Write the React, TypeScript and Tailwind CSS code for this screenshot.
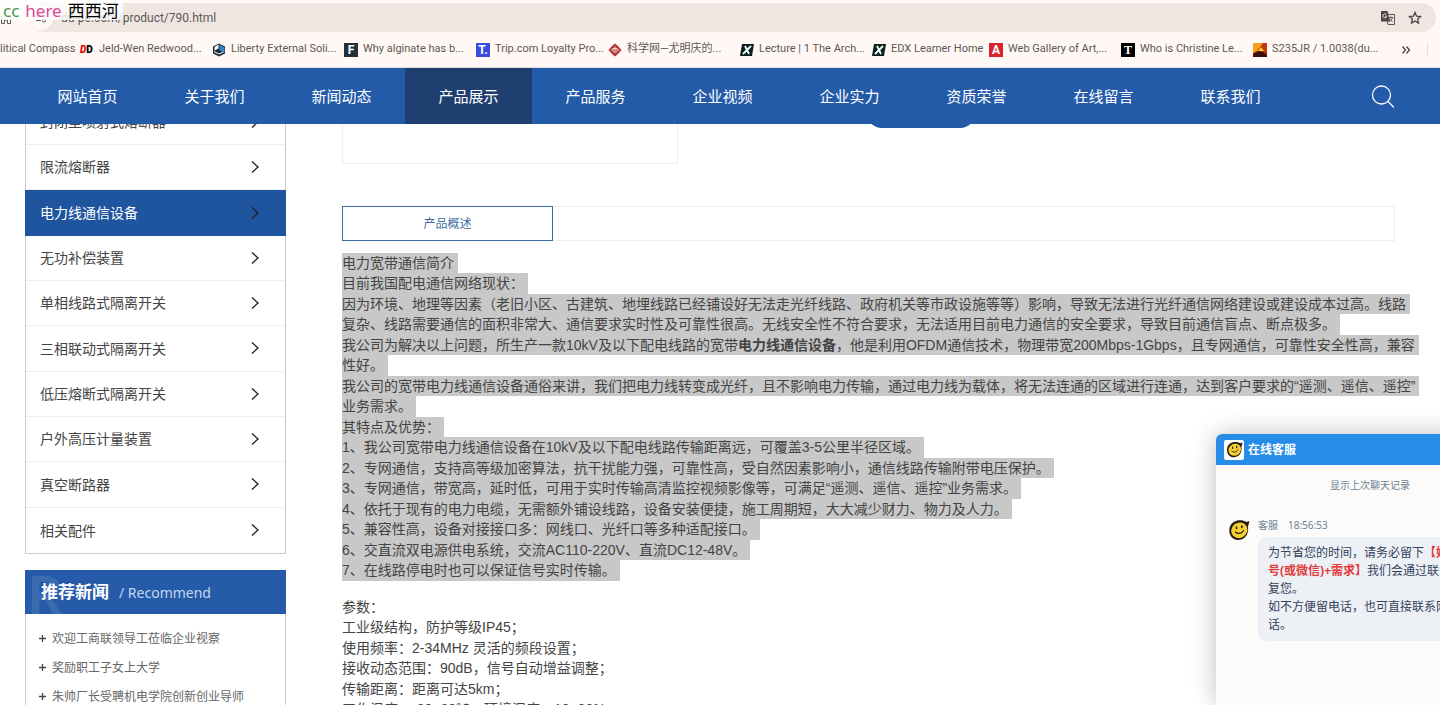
import type { ReactNode } from 'react';

// Product page as seen in the browser: toolbar and bookmarks on top, the site
// navigation pinned over a scrolled page, and the support chat in the corner.

const FONT_CHROME = "font-['Roboto','Noto_Sans_CJK_SC',sans-serif]";
const FONT_UI = "font-['Noto_Sans','Noto_Sans_CJK_SC',sans-serif]";
const FONT_BODY = "font-['Liberation_Sans','Noto_Sans_CJK_SC',sans-serif]";

const NAV = [
  '网站首页',
  '关于我们',
  '新闻动态',
  '产品展示',
  '产品服务',
  '企业视频',
  '企业实力',
  '资质荣誉',
  '在线留言',
  '联系我们',
];

const CATEGORIES = [
  '封闭型喷射式熔断器',
  '限流熔断器',
  '电力线通信设备',
  '无功补偿装置',
  '单相线路式隔离开关',
  '三相联动式隔离开关',
  '低压熔断式隔离开关',
  '户外高压计量装置',
  '真空断路器',
  '相关配件',
];

const NEWS = ['欢迎工商联领导工莅临企业视察', '奖励职工子女上大学', '朱帅厂长受聘机电学院创新创业导师'];

const OVERVIEW: ReactNode[] = [
  '电力宽带通信简介',
  '目前我国配电通信网络现状：',
  '因为环境、地理等因素（老旧小区、古建筑、地埋线路已经铺设好无法走光纤线路、政府机关等市政设施等等）影响，导致无法进行光纤通信网络建设或建设成本过高。线路',
  '复杂、线路需要通信的面积非常大、通信要求实时性及可靠性很高。无线安全性不符合要求，无法适用目前电力通信的安全要求，导致目前通信盲点、断点极多。',
  <>
    我公司为解决以上问题，所生产一款10kV及以下配电线路的宽带<b>电力线通信设备</b>
    ，他是利用OFDM通信技术，物理带宽200Mbps-1Gbps，且专网通信，可靠性安全性高，兼容
  </>,
  '性好。',
  '我公司的宽带电力线通信设备通俗来讲，我们把电力线转变成光纤，且不影响电力传输，通过电力线为载体，将无法连通的区域进行连通，达到客户要求的“遥测、遥信、遥控”',
  '业务需求。',
  '其特点及优势：',
  '1、我公司宽带电力线通信设备在10kV及以下配电线路传输距离远，可覆盖3-5公里半径区域。',
  '2、专网通信，支持高等级加密算法，抗干扰能力强，可靠性高，受自然因素影响小，通信线路传输附带电压保护。',
  '3、专网通信，带宽高，延时低，可用于实时传输高清监控视频影像等，可满足“遥测、遥信、遥控”业务需求。',
  '4、依托于现有的电力电缆，无需额外铺设线路，设备安装便捷，施工周期短，大大减少财力、物力及人力。',
  '5、兼容性高，设备对接接口多：网线口、光纤口等多种适配接口。',
  '6、交直流双电源供电系统，交流AC110-220V、直流DC12-48V。',
  '7、在线路停电时也可以保证信号实时传输。',
];

const PARAMS = [
  '参数：',
  '工业级结构，防护等级IP45；',
  '使用频率：2-34MHz 灵活的频段设置；',
  '接收动态范围：90dB，信号自动增益调整；',
  '传输距离：距离可达5km；',
  '工作温度：-20~60℃，环境湿度：10~90%；',
];

function Tile({ color, children }: { color: string; children: ReactNode }) {
  return (
    <span className={`flex size-3.5 items-center justify-center text-[12px] leading-none font-bold text-white ${color}`}>
      {children}
    </span>
  );
}

function EdxIcon() {
  return (
    <svg viewBox="0 0 14 14" className="size-3.5">
      <path d="M2 1h12l-2 12H0z" fill="#06231f" />
      <path d="M5 3l4 8M11 3l-8 8" stroke="#fff" strokeWidth="1.800" />
    </svg>
  );
}

function LibertyIcon() {
  return (
    <svg viewBox="0 0 14 14" className="size-3.5">
      <path d="M7 .5 13 3.500v7L7 13.500 1 10.500v-7z" fill="#1d2b3d" />
      <path d="M6.500 1.500 2.500 4v3.500l4-2z" fill="#fff" />
      <path d="M7.500 1.500 12.500 4.500v5L7.500 7.500z" fill="#3587c9" />
      <path d="M2 8.500 7 11l4.500-2" stroke="#fff" fill="none" />
    </svg>
  );
}

function ScienceIcon() {
  return (
    <svg viewBox="0 0 14 14" className="size-3.5">
      <path d="M7 .5 10 3l3.500 4L10 11l-3 2.500L4 11 .5 7 4 3z" fill="#b3383c" />
      <path d="M3 7h8M7 3.500v3M4.500 5.500h5M5 9h4" stroke="#f3d5d0" />
    </svg>
  );
}

function SteelIcon() {
  return (
    <svg viewBox="0 0 14 14" className="size-3.5">
      <path d="M0 0h14v14H0z" fill="#c23a0c" />
      <path d="M0 0h10L4 8l-4 2z" fill="#f6a01d" />
      <path d="M8 4l3 4H5z" fill="#ffd34a" />
      <path d="M0 12c4-5 9-5 14 0v2H0z" fill="#3b0f0b" />
    </svg>
  );
}

const BOOKMARKS: { label: string; icon: ReactNode; short?: boolean }[] = [
  {
    label: 'Jeld-Wen Redwood...',
    icon: (
      <span className="w-3.5 text-[10px] leading-none font-black text-black">
        <i className="text-red-600">D</i>D
      </span>
    ),
  },
  { label: 'Liberty External Soli...', icon: <LibertyIcon /> },
  { label: 'Why alginate has b...', icon: <Tile color="bg-[#22323d]">F</Tile> },
  { label: 'Trip.com Loyalty Pro...', icon: <Tile color="bg-[#3a4be0]">T.</Tile> },
  { label: '科学网—尤明庆的...', icon: <ScienceIcon /> },
  { label: 'Lecture | 1 The Arch...', icon: <EdxIcon /> },
  { label: 'EDX Learner Home', icon: <EdxIcon />, short: true },
  { label: 'Web Gallery of Art,...', icon: <Tile color="bg-[#d8232f]">A</Tile> },
  {
    label: 'Who is Christine Le...',
    icon: (
      <Tile color="bg-black">
        <span className="font-['Liberation_Serif',serif]">T</span>
      </Tile>
    ),
  },
  { label: 'S235JR / 1.0038(du...', icon: <SteelIcon /> },
];

function Smiley({ className }: { className: string }) {
  return (
    <svg viewBox="0 0 22 22" className={className}>
      <path d="M18.500 3C13-.5 4 1 1.800 8c-2 7 2 13 8.200 13 7 0 11-6 10-13.500L21.500 2z" fill="#241c12" />
      <ellipse cx="11.300" cy="11.300" rx="8.300" ry="7.600" transform="rotate(-35 11.300 11.300)" fill="#f6ce2f" />
      <path d="M8.500 8v1.500M13.800 7v1.500" stroke="#241c12" strokeWidth="1.600" strokeLinecap="round" />
      <path d="M7.500 13c2.500 2.500 6.500 1.500 8-1.500" stroke="#241c12" strokeWidth="1.200" fill="none" strokeLinecap="round" />
    </svg>
  );
}

function BrowserBar() {
  return (
    <header className={`relative border-b border-[#dcdad9] bg-[#fff8f4] text-[#5e5855] ${FONT_CHROME}`}>
      <div className="flex pt-[3px] pr-1 pl-[29px]">
        <div className="flex h-[29px] flex-1 items-center rounded-full bg-[#efe6e2] pr-3.5">
          <span className="mr-2 flex size-6 items-center justify-center rounded-full bg-[#fff8f4]">
            <svg viewBox="0 0 12 12" className="size-3" fill="none" stroke="currentColor">
              <circle cx="3" cy="3.500" r="1.500" />
              <path d="M6 3.500h5M1 8.500h5" />
              <circle cx="9" cy="8.500" r="1.500" />
            </svg>
          </span>
          <input
            aria-label="Address"
            defaultValue="dd-pe.com/product/790.html"
            className="min-w-0 flex-1 bg-transparent text-[12px] outline-none"
          />
          <button aria-label="Translate" className="mr-3">
            <svg viewBox="0 0 16 16" className="size-4">
              <path d="M6 4.500h8.500v10H8z" fill="#efe6e2" stroke="#5a5350" />
              <path d="M9 7.500h4M11 6.500v1M12.500 7.500c-.5 2-1.500 3-3 4M9.500 8.500c.7 1.500 1.800 2.500 3 3" stroke="#5a5350" fill="none" />
              <path d="M1 1h6.500l2.500 10.500H1z" fill="#4c4543" />
              <path d="M6.300 4.500a2 2 0 1 0 .5 1.700H5" stroke="#efe6e2" fill="none" />
            </svg>
          </button>
          <button aria-label="Bookmark this page">
            <svg viewBox="0 0 14 14" className="size-3.5" fill="none" stroke="#4c4543" strokeWidth="1.300">
              <path d="M7 1.500 8.600 5.200l4 .3-3 2.700.9 3.900L7 10l-3.500 2.100.9-3.900-3-2.700 4-.3z" />
            </svg>
          </button>
        </div>
      </div>
      <nav className="flex h-[35px] items-center text-[11px] whitespace-nowrap">
        <a href="#compass" className="w-20 shrink-0">
          litical Compass
        </a>
        {BOOKMARKS.map((b) => (
          <a
            key={b.label}
            href="#bookmark"
            className={`flex shrink-0 items-center gap-[5px] ${b.short ? 'w-[117px]' : 'w-[132px]'}`}
          >
            {b.icon}
            {b.label}
          </a>
        ))}
        <button aria-label="More bookmarks" className="mr-4 ml-auto">
          <svg viewBox="0 0 10 10" className="size-2.5" fill="none" stroke="#4c4543" strokeWidth="1.300">
            <path d="m1.500 1.500 3 3.500-3 3.500M5.500 1.500l3 3.500-3 3.500" />
          </svg>
        </button>
        <span className="mr-3 h-3.5 w-px bg-[#f6dcc6]" />
      </nav>

      <svg viewBox="0 0 12 12" className="absolute top-3 left-0 size-3" fill="none" stroke="currentColor">
        <path d="M1.500 4v7.500h3V8h3v3.500h3V4" />
      </svg>
      <div
        className={`absolute top-0 left-0 flex h-5 items-center gap-1.5 rounded-r bg-white/80 pr-1 pl-[3px] text-[17px] leading-none ${FONT_UI}`}
      >
        <span className="text-[#3f9a4d]">cc</span>
        <span className="text-[#e0479b]">here</span>
        <span className="text-black">西西河</span>
      </div>
    </header>
  );
}

function SiteNav() {
  return (
    <nav className={`relative z-10 flex h-14 items-center bg-[#245ba9] pr-[45px] pl-6 text-[15px] text-white ${FONT_UI}`}>
      {NAV.map((item) => (
        <a
          key={item}
          href="#nav"
          className={`flex h-full w-[127px] shrink-0 items-center justify-center ${item === '产品展示' ? 'bg-[#1f3f70]' : ''}`}
        >
          {item}
        </a>
      ))}
      <button aria-label="搜索" className="ml-auto">
        <svg viewBox="0 0 24 24" className="size-6" fill="none" stroke="currentColor" strokeWidth="1.300">
          <circle cx="10.500" cy="11" r="9" />
          <path d="m17 17.500 6 6" />
        </svg>
      </button>
    </nav>
  );
}

function Sidebar() {
  return (
    <aside className={`w-[261px] shrink-0 ${FONT_UI}`}>
      <ul className="border border-t-0 border-[#ccc] text-[14px] text-[#444]">
        {CATEGORIES.map((item) => {
          const active = item === '电力线通信设备';
          return (
            <li
              key={item}
              className={`h-[45px] nth-[3n]:h-[46px] ${active ? '-mx-px bg-[#1f549f] px-px text-white' : 'border-b border-[#eee] last:border-b-0'}`}
            >
              <a href="#category" className="flex h-full items-center justify-between pr-[26px] pb-px pl-3.5">
                {item}
                <svg viewBox="0 0 8 12" className="h-3 w-2" fill="none" stroke="#222" strokeWidth="1.400">
                  <path d="m1 .5 6 5.500-6 5.500" />
                </svg>
              </a>
            </li>
          );
        })}
      </ul>

      <section className="mt-4 border border-t-0 border-[#ccc]">
        <h2 className="relative -mx-px flex h-11 items-center overflow-hidden bg-[#255ba8] pl-4 text-white">
          <span aria-hidden className="absolute -top-1 left-0.5 text-[56px] leading-none font-semibold text-white/10">
            R
          </span>
          <span className="text-[17px] font-bold">推荐新闻</span>
          <span className="ml-2.5 text-[14px] text-[#c3d6ef]">/ Recommend</span>
        </h2>
        <ul className="pt-2.5 pb-4 text-[12px] leading-[29px] text-[#666]">
          {NEWS.map((item) => (
            <li key={item}>
              <a href="#news" className="flex items-center gap-1.5 pl-[13px]">
                <svg viewBox="0 0 7 7" className="size-[7px]" stroke="#444" strokeWidth="1.300">
                  <path d="M0 3.500h7M3.500 0v7" />
                </svg>
                {item}
              </a>
            </li>
          ))}
        </ul>
      </section>
    </aside>
  );
}

// Average line pitch is 20.5px, so every second line gets one extra pixel.
function Lines({ lines, selected }: { lines: ReactNode[]; selected?: boolean }) {
  return (
    <div className="text-[14px] leading-5 whitespace-nowrap text-[#444]">
      {lines.map((line, i) => (
        <p key={i} className={`w-fit even:pb-px ${selected ? 'bg-[#c8c8c8] pr-1' : ''}`}>
          {line}
        </p>
      ))}
    </div>
  );
}

function Product() {
  return (
    <article className={`min-w-0 flex-1 ${FONT_BODY}`}>
      <div className="flex items-start">
        <div className="h-16 w-[336px] border border-t-0 border-[#eee]" />
        <button aria-label="在线咨询" className="ml-[188px] h-7 w-[110px] rounded-b-2xl bg-[#245ba9]" />
      </div>

      <div className="mt-[42px] flex border border-[#eee]">
        <button className="-m-px h-[35px] w-[211px] border border-[#3f6ba5] text-[12px] text-[#3f6ba5]">产品概述</button>
      </div>

      <div className="mt-3">
        <Lines lines={OVERVIEW} selected />
      </div>
      <div className="mt-4">
        <Lines lines={PARAMS} />
      </div>
    </article>
  );
}

function Chat() {
  return (
    <section
      className={`absolute -right-[84px] bottom-0 z-20 h-[271px] w-[308px] rounded-t-md bg-[#fcfbf9] text-[#33415c] shadow-[0_0_24px_rgba(0,0,0,0.25)] ${FONT_UI}`}
    >
      <h2 className="flex h-[31px] items-center gap-1 rounded-t-md bg-[#268ce8] pl-2 text-[12px] font-semibold text-white">
        <span className="flex size-5 items-center justify-center rounded-xs bg-white">
          <Smiley className="size-[17px]" />
        </span>
        在线客服
      </h2>
      <button className="mt-3 block w-full text-[10px] leading-4 text-[#6d7f92]">显示上次聊天记录</button>
      <div className="mt-[22px] flex gap-2 pl-3">
        <Smiley className="mt-1 size-[22px] shrink-0" />
        <div>
          <div className="flex h-5 items-center gap-2.5 text-[10px] text-[#6d8296]">
            <span>客服</span>
            <time>18:56:53</time>
          </div>
          <div className="mt-0.5 w-[240px] rounded-lg bg-[#edf1f5] px-2.5 py-[7px] text-[12px] leading-[18px] whitespace-nowrap">
            <p>
              为节省您的时间，请务必留下<b className="text-[#e23c3c]">【姓名+</b>
            </p>
            <p>
              <b className="text-[#e23c3c]">号(或微信)+需求】</b>我们会通过联系
            </p>
            <p>复您。</p>
            <p>如不方便留电话，也可直接联系网站</p>
            <p>话。</p>
          </div>
        </div>
      </div>
    </section>
  );
}

export default function App() {
  return (
    <div className="relative h-screen overflow-hidden bg-white">
      <BrowserBar />
      <SiteNav />
      <main className="-mt-6 flex gap-14 pr-[45px] pl-[25px]">
        <Sidebar />
        <Product />
      </main>
      <Chat />
    </div>
  );
}
